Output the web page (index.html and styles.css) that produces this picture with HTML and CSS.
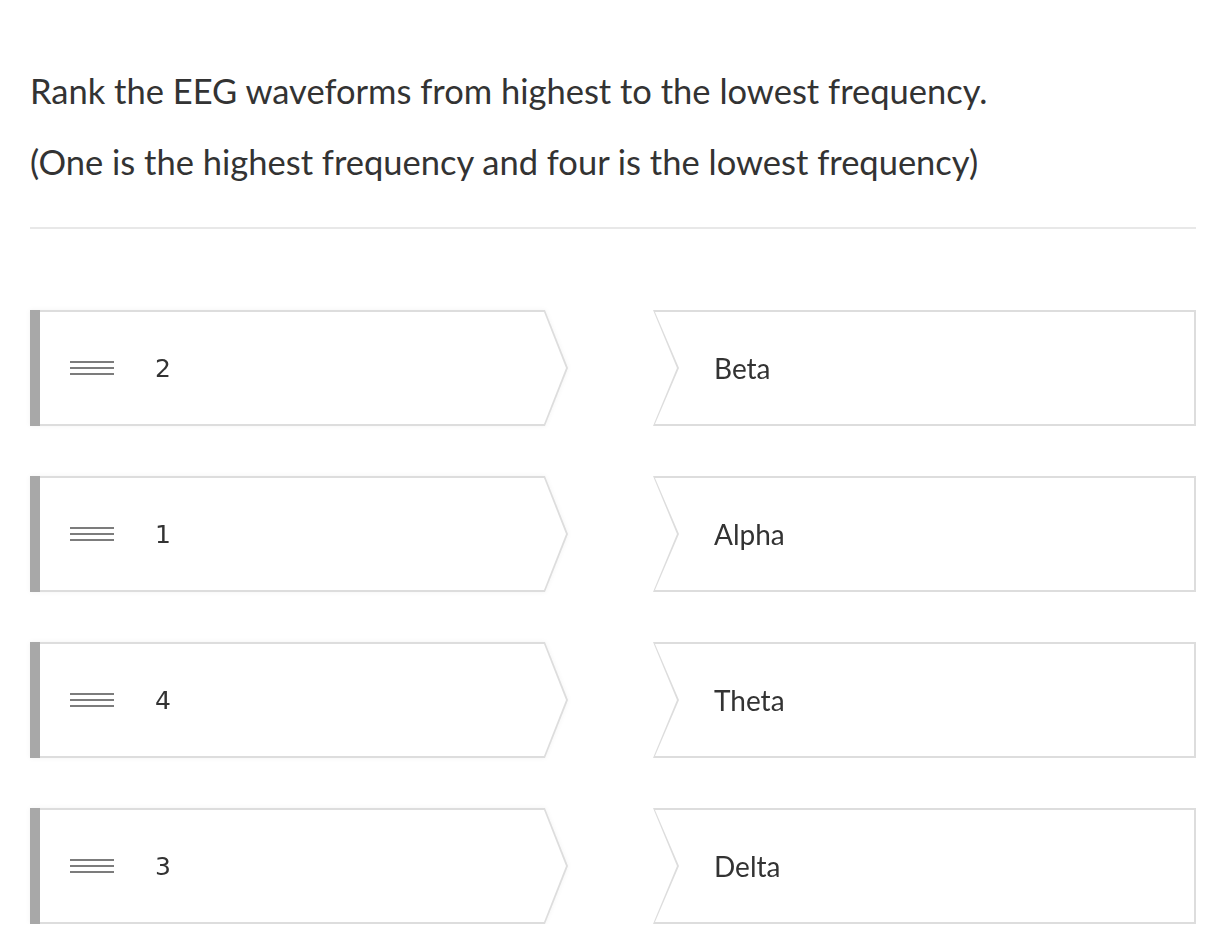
FILE: index.html
```html
<!DOCTYPE html>
<html lang="en">
<head>
<meta charset="utf-8">
<title>Matching question</title>
<link rel="stylesheet" href="styles.css">
</head>
<body>
<main class="page">
  <div class="question">
    <p class="q-line">Rank the EEG waveforms from highest to the lowest frequency.</p>
    <p class="q-line">(One is the highest frequency and four is the lowest frequency)</p>
  </div>
  <hr class="sep">
  <div class="pairs">
    <div class="pair">
      <div class="item">
        <div class="bar"></div>
        <div class="arrow-out"><div class="arrow-in">
          <span class="grip"><i></i><i></i><i></i></span>
          <span class="num">2</span>
        </div></div>
      </div>
      <div class="notch-out"><div class="notch-in"><span class="label">Beta</span></div></div>
    </div>
    <div class="pair">
      <div class="item">
        <div class="bar"></div>
        <div class="arrow-out"><div class="arrow-in">
          <span class="grip"><i></i><i></i><i></i></span>
          <span class="num">1</span>
        </div></div>
      </div>
      <div class="notch-out"><div class="notch-in"><span class="label">Alpha</span></div></div>
    </div>
    <div class="pair">
      <div class="item">
        <div class="bar"></div>
        <div class="arrow-out"><div class="arrow-in">
          <span class="grip"><i></i><i></i><i></i></span>
          <span class="num">4</span>
        </div></div>
      </div>
      <div class="notch-out"><div class="notch-in"><span class="label">Theta</span></div></div>
    </div>
    <div class="pair">
      <div class="item">
        <div class="bar"></div>
        <div class="arrow-out"><div class="arrow-in">
          <span class="grip"><i></i><i></i><i></i></span>
          <span class="num">3</span>
        </div></div>
      </div>
      <div class="notch-out"><div class="notch-in"><span class="label">Delta</span></div></div>
    </div>
  </div>
</main>
</body>
</html>
```

FILE: styles.css
```css
html, body {
  margin: 0;
  padding: 0;
  background: #ffffff;
}
body {
  font-family: Lato, "Open Sans", Arial, sans-serif;
  color: #333333;
}
.page {
  width: 1166px;
  padding: 0 25px 0 30px;
}
.question {
  padding-top: 73px;
}
.q-line {
  margin: 0;
  font-size: 34.5px;
  line-height: 36px;
  color: #333333;
}
.q-line + .q-line {
  margin-top: 35px;
}
.sep {
  margin: 47px 0 0 0;
  height: 2px;
  border: 0;
  background: #e8e8e8;
}
.pairs {
  display: flex;
  flex-direction: column;
  gap: 50px;
  padding-top: 81px;
}
.pair {
  display: grid;
  grid-template-columns: 538px 543px;
  column-gap: 85px;
  height: 116px;
}
.item {
  display: flex;
  filter: drop-shadow(0 0 2px rgba(0,0,0,0.05));
}
.bar {
  width: 10px;
  background: #a8a8a8;
  flex: none;
}
.arrow-out {
  flex: 1;
  background: #dddddd;
  clip-path: polygon(0 0, calc(100% - 23px) 0, 100% 50%, calc(100% - 23px) 100%, 0 100%);
  padding: 2px 2px 2px 0;
  display: flex;
}
.arrow-in {
  flex: 1;
  background: #ffffff;
  clip-path: polygon(0 0, calc(100% - 22px) 0, 100% 50%, calc(100% - 22px) 100%, 0 100%);
  display: flex;
  align-items: center;
  padding-left: 30px;
}
.grip {
  display: flex;
  flex-direction: column;
  gap: 4px;
  width: 44px;
  margin-right: 41px;
}
.grip i {
  display: block;
  height: 2px;
  background: #7c7c7c;
}
.num {
  font-family: "DejaVu Sans", Arial, sans-serif;
  font-size: 25px;
  color: #333333;
  font-weight: 400;
}
.notch-out {
  background: #dddddd;
  clip-path: polygon(0 0, 100% 0, 100% 100%, 0 100%, 24px 50%);
  padding: 2px 2px 2px 0;
  display: flex;
  filter: drop-shadow(0 0 2px rgba(0,0,0,0.05));
}
.notch-in {
  flex: 1;
  background: #ffffff;
  clip-path: polygon(0 0, 100% 0, 100% 100%, 0 100%, 24px 50%);
  margin-left: 2px;
  display: flex;
  align-items: center;
  padding-left: 59px;
}
.label {
  font-size: 28px;
  color: #333333;
}
```
